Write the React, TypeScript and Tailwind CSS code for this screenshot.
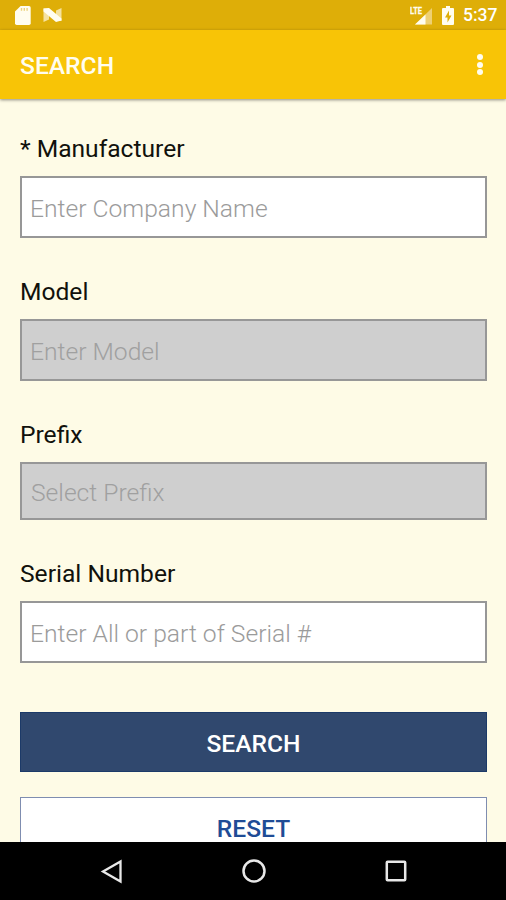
import React from 'react';

interface FieldProps {
    label: string;
    placeholder: string;
    disabled?: boolean;
    boxClass: string;
    inputClass: string;
}

const Field: React.FC<FieldProps> = ({ label, placeholder, disabled, boxClass, inputClass }) => {
    return (
        <label className="block">
            <span className="block h-7 pt-px leading-7 text-[24.6px] text-[#11110c] whitespace-nowrap">{label}</span>
            <div className={`mt-3.5 w-full border-2 border-[#979797] ${disabled ? 'bg-[#cfcfcf]' : 'bg-white'} ${boxClass}`}>
                <input
                    type="text"
                    disabled={disabled}
                    placeholder={placeholder}
                    className={`block w-full h-full bg-transparent px-2 text-[24.65px] font-light outline-hidden ${inputClass}`}
                />
            </div>
        </label>
    );
};

const StatusBar = () => (
    <div className="flex h-[30px] shrink-0 items-center bg-[#deae08] pl-[15px] pr-[10px] text-white">
        {/* sd card */}
        <svg width="16" height="19" viewBox="0 0 16 19">
            <path fill="#fffdf0" d="M5.6 0H14a1.7 1.7 0 0 1 1.7 1.7v15.6A1.7 1.7 0 0 1 14 19H1.7A1.7 1.7 0 0 1 0 17.3V5.6z" />
            <path stroke="#ecd27c" strokeWidth="1.4" d="M6.5 2v2.8M9.3 2v2.8M12.1 2v2.8" />
        </svg>
        {/* android n */}
        <svg className="ml-3" width="19" height="16" viewBox="0 0 19 16">
            <path fill="#f5e29f" d="M0.500 1.500H6V12.500L0.500 15zM18.500 1v13H13V3.500z" />
            <path fill="#fffdf0" d="M0.500 1.500L6 1 18.500 11.500v2L13 15 0.500 4.500z" />
        </svg>
        <svg className="ml-auto" width="22" height="19" viewBox="0 0 22 19">
            <path fill="#eed073" d="M22 2v16.5H5z" />
            <path fill="#fffdf0" d="M15.5 8.5v10H5z" />
            <text x="0" y="8" fontSize="9.5" fontWeight="700" fontFamily="Roboto, sans-serif" fill="#fffdf0" stroke="#fffdf0" strokeWidth="0.3" textLength="12" lengthAdjust="spacingAndGlyphs">LTE</text>
        </svg>
        <svg className="ml-[10px]" width="12" height="19" viewBox="0 0 12 19">
            <path fill="#fffdf0" d="M4 0h4v2h3q1 0 1 1v15q0 1-1 1H1q-1 0-1-1V3q0-1 1-1h3z" />
            <path fill="#deae08" d="M7 4.5L3 11.5h2.5V16.5l4-7H7z" />
        </svg>
        <span className="ml-[9px] mt-0.5 w-[33px] whitespace-nowrap text-[17.5px] leading-none font-medium">5:37</span>
    </div>
);

const NavBar = () => (
    <div className="flex h-[58px] shrink-0 items-center justify-between bg-black pl-[99px] pr-[99px]">
        <svg width="24" height="26" viewBox="0 0 24 26" fill="none" stroke="#e8e8e8" strokeWidth="2.3">
            <path d="M21.5 3.5v20L4 13.5z" />
        </svg>
        <svg width="26" height="26" viewBox="0 0 26 26" fill="none" stroke="#e8e8e8" strokeWidth="2.5">
            <circle cx="13" cy="13" r="10.5" />
        </svg>
        <svg width="22" height="26" viewBox="0 0 22 26" fill="none" stroke="#e8e8e8" strokeWidth="2.5">
            <rect x="1.8" y="3.8" width="18.4" height="18.4" rx="0.8" />
        </svg>
    </div>
);

const App = () => {
    return (
        <div className="flex h-[900px] w-[506px] flex-col overflow-hidden bg-[#fefbe6] font-['Roboto',sans-serif]">
            <StatusBar />
            <header className="relative flex h-[69px] shrink-0 items-center justify-between bg-[#f8c406] pl-5 pr-[23.5px] shadow-[0_1px_3px_rgba(0,0,0,0.45)]">
                <h1 className="mt-1 text-[24.6px] font-medium text-[#fffdf0]">SEARCH</h1>
                <button className="flex flex-col gap-[1.5px]">
                    <span className="h-1.5 w-1.5 rounded-full bg-[#fffdf0]" />
                    <span className="h-1.5 w-1.5 rounded-full bg-[#fffdf0]" />
                    <span className="h-1.5 w-1.5 rounded-full bg-[#fffdf0]" />
                </button>
            </header>
            <main className="min-h-0 flex-1 overflow-hidden pt-[35px] pl-5 pr-[19px]">
                <div className="flex flex-col gap-[39px]">
                    <Field label="* Manufacturer" placeholder="Enter Company Name" boxClass="h-[62px]" inputClass="pt-0.5 placeholder:text-[#9b9b9b]" />
                    <Field label="Model" placeholder="Enter Model" disabled boxClass="h-[62px]" inputClass="pt-0.5 placeholder:text-[#a0a0a0]" />
                    <Field label="Prefix" placeholder="Select Prefix" disabled boxClass="h-[58px]" inputClass="pt-0.5 pl-[9px] placeholder:text-[#a0a0a0]" />
                    <Field label="Serial Number" placeholder="Enter All or part of Serial #" boxClass="h-[62px]" inputClass="pt-0.5 placeholder:text-[#9b9b9b]" />
                </div>
                <button className="mt-[49px] block h-[60px] w-full border border-[#1c3a68] bg-[#30486e] pt-1 text-[24.6px] font-medium text-white">SEARCH</button>
                <button className="mt-[25px] block h-[62px] w-full border border-[#7f8db0] bg-white pt-0.5 text-[24.6px] leading-none font-medium text-[#1f4c96]">RESET</button>
            </main>
            <NavBar />
        </div>
    );
};

export default App;
